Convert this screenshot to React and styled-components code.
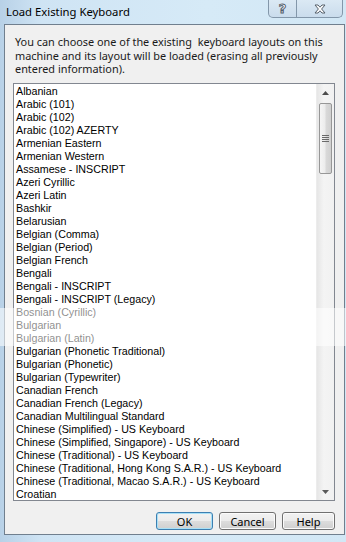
import styled, { createGlobalStyle, css } from "styled-components";

const Global = createGlobalStyle`
  html, body {
    margin: 0;
    padding: 0;
    width: 346px;
    height: 542px;
    overflow: hidden;
  }
`;

const Frame = styled.div`
  position: relative;
  width: 346px;
  height: 542px;
  display: flex;
  flex-direction: column;
  background: linear-gradient(to right, #b8d1e7 0%, #cfe4f4 12%, #d6eaf7 60%, #d2e7f5 100%);
  overflow: hidden;
`;

const TitleBar = styled.div`
  height: 24px;
  display: flex;
  align-items: flex-start;
  flex-shrink: 0;
`;

const Title = styled.div`
  font-family: "Noto Sans", "Open Sans", sans-serif;
  font-size: 11.3px;
  color: #000;
  padding: 5px 0 0 6px;
  line-height: 14px;
`;

const CaptionGroup = styled.div`
  margin-left: auto;
  margin-right: 3px;
  display: flex;
  height: 17px;
  border: 1px solid #8397aa;
  border-top: none;
  border-radius: 0 0 5px 5px;
  background: linear-gradient(#dbe9f4, #cadcec);
  overflow: hidden;
`;

const CaptionButton = styled.div`
  width: ${(p) => p.$w}px;
  display: flex;
  align-items: center;
  justify-content: center;
  ${(p) =>
    p.$divider &&
    css`
      border-right: 1px solid #8397aa;
    `}
`;

const HelpGlyph = styled.span`
  font-family: "DejaVu Sans", sans-serif;
  font-weight: bold;
  font-size: 13px;
  line-height: 13px;
  color: #fff;
  -webkit-text-stroke: 1px #55606c;
`;

const Client = styled.div`
  margin: 0 1px 7px 4px;
  flex: 1;
  display: flex;
  flex-direction: column;
  border: 1px solid #707f8e;
  background: #f0f0f0;
`;

const Description = styled.p`
  margin: 0;
  padding: 10px 12px 0 10px;
  height: 58px;
  box-sizing: border-box;
  font-family: "Noto Sans", "Open Sans", sans-serif;
  font-size: 10.9px;
  line-height: 13.6px;
  color: #1a1a1a;
  white-space: pre-wrap;
`;

const ListBox = styled.div`
  margin: 0 9px 0 8px;
  height: 418px;
  box-sizing: border-box;
  border: 1px solid #828790;
  background: #fff;
  display: flex;
`;

const Items = styled.ul`
  flex: 1;
  list-style: none;
  margin: 0;
  padding: 1px 0 0 2px;
  overflow: hidden;
`;

const Item = styled.li`
  height: 13px;
  line-height: 13px;
  font-family: "Liberation Sans", Arial, sans-serif;
  font-size: 10.7px;
  color: #000;
  white-space: nowrap;
`;

const ScrollTrack = styled.div`
  width: 17px;
  display: flex;
  flex-direction: column;
  align-items: center;
  background: linear-gradient(to right, #e6e6e6, #f4f4f4 40%, #f1f1f1);
  border-left: 1px solid #ececec;
`;

const Arrow = styled.div`
  height: 17px;
  width: 17px;
  display: flex;
  align-items: center;
  justify-content: center;
`;

const Thumb = styled.div`
  margin-top: 2px;
  width: 13px;
  height: 71px;
  box-sizing: border-box;
  border: 1px solid #979797;
  border-radius: 2px;
  background: linear-gradient(to right, #f5f5f5, #ececec 45%, #d9d9d9 55%, #d0d0d0);
  display: flex;
  align-items: center;
  justify-content: center;
`;

const Spacer = styled.div`
  flex: 1;
`;

const ButtonRow = styled.div`
  display: flex;
  justify-content: flex-end;
  gap: 6px;
  padding: 11px 9px 0 0;
`;

const Button = styled.button`
  width: ${(p) => p.$w}px;
  height: 18px;
  padding: 0;
  box-sizing: border-box;
  border-radius: 3px;
  border: 1px solid ${(p) => (p.$default ? "#3c7fb1" : "#707070")};
  background: linear-gradient(#f2f2f2 0%, #ebebeb 50%, #dddddd 50%, #cfcfcf 100%);
  box-shadow: inset 0 0 0 1px ${(p) => (p.$default ? "#a8e0f7" : "#fbfbfb")};
  font-family: "Noto Sans", "Open Sans", sans-serif;
  font-size: 11px;
  line-height: 15px;
  color: #000;
`;

const Fade = styled.div`
  position: absolute;
  left: 0;
  right: 0;
  top: 308px;
  height: 38px;
  background: rgba(255, 255, 255, 0.55);
  pointer-events: none;
`;

const layouts = [
  "Albanian",
  "Arabic (101)",
  "Arabic (102)",
  "Arabic (102) AZERTY",
  "Armenian Eastern",
  "Armenian Western",
  "Assamese - INSCRIPT",
  "Azeri Cyrillic",
  "Azeri Latin",
  "Bashkir",
  "Belarusian",
  "Belgian (Comma)",
  "Belgian (Period)",
  "Belgian French",
  "Bengali",
  "Bengali - INSCRIPT",
  "Bengali - INSCRIPT (Legacy)",
  "Bosnian (Cyrillic)",
  "Bulgarian",
  "Bulgarian (Latin)",
  "Bulgarian (Phonetic Traditional)",
  "Bulgarian (Phonetic)",
  "Bulgarian (Typewriter)",
  "Canadian French",
  "Canadian French (Legacy)",
  "Canadian Multilingual Standard",
  "Chinese (Simplified) - US Keyboard",
  "Chinese (Simplified, Singapore) - US Keyboard",
  "Chinese (Traditional) - US Keyboard",
  "Chinese (Traditional, Hong Kong S.A.R.) - US Keyboard",
  "Chinese (Traditional, Macao S.A.R.) - US Keyboard",
  "Croatian",
];

const CloseIcon = () => (
  <svg width="12" height="10" viewBox="0 0 12 10">
    <path
      d="M1 1 H4 L6 3.2 L8 1 H11 L7.6 5 L11 9 H8 L6 6.8 L4 9 H1 L4.4 5 Z"
      fill="#fff"
      stroke="#56606b"
      strokeWidth="1"
      strokeLinejoin="round"
    />
  </svg>
);

const TriangleUp = () => (
  <svg width="7" height="4" viewBox="0 0 7 4">
    <path d="M0 4 L3.5 0 L7 4 Z" fill="#4d4d4d" />
  </svg>
);

const TriangleDown = () => (
  <svg width="7" height="4" viewBox="0 0 7 4">
    <path d="M0 0 L3.5 4 L7 0 Z" fill="#5a5a5a" />
  </svg>
);

const Grip = () => (
  <svg width="7" height="7" viewBox="0 0 7 7">
    {[0, 2, 4, 6].map((y) => (
      <rect key={y} x="0" y={y} width="7" height="1" fill="#6a6a6a" />
    ))}
  </svg>
);

export default function App() {
  return (
    <>
      <Global />
      <Frame>
        <TitleBar>
          <Title>Load Existing Keyboard</Title>
          <CaptionGroup>
            <CaptionButton $w={27} $divider>
              <HelpGlyph>?</HelpGlyph>
            </CaptionButton>
            <CaptionButton $w={45}>
              <CloseIcon />
            </CaptionButton>
          </CaptionGroup>
        </TitleBar>
        <Client>
          <Description>
            {"You can choose one of the existing  keyboard layouts on this machine and its layout will be loaded (erasing all previously entered information)."}
          </Description>
          <ListBox>
            <Items>
              {layouts.map((name) => (
                <Item key={name}>{name}</Item>
              ))}
            </Items>
            <ScrollTrack>
              <Arrow>
                <TriangleUp />
              </Arrow>
              <Thumb>
                <Grip />
              </Thumb>
              <Spacer />
              <Arrow>
                <TriangleDown />
              </Arrow>
            </ScrollTrack>
          </ListBox>
          <ButtonRow>
            <Button $w={57} $default>OK</Button>
            <Button $w={57}>Cancel</Button>
            <Button $w={53}>Help</Button>
          </ButtonRow>
        </Client>
        <Fade />
      </Frame>
    </>
  );
}
